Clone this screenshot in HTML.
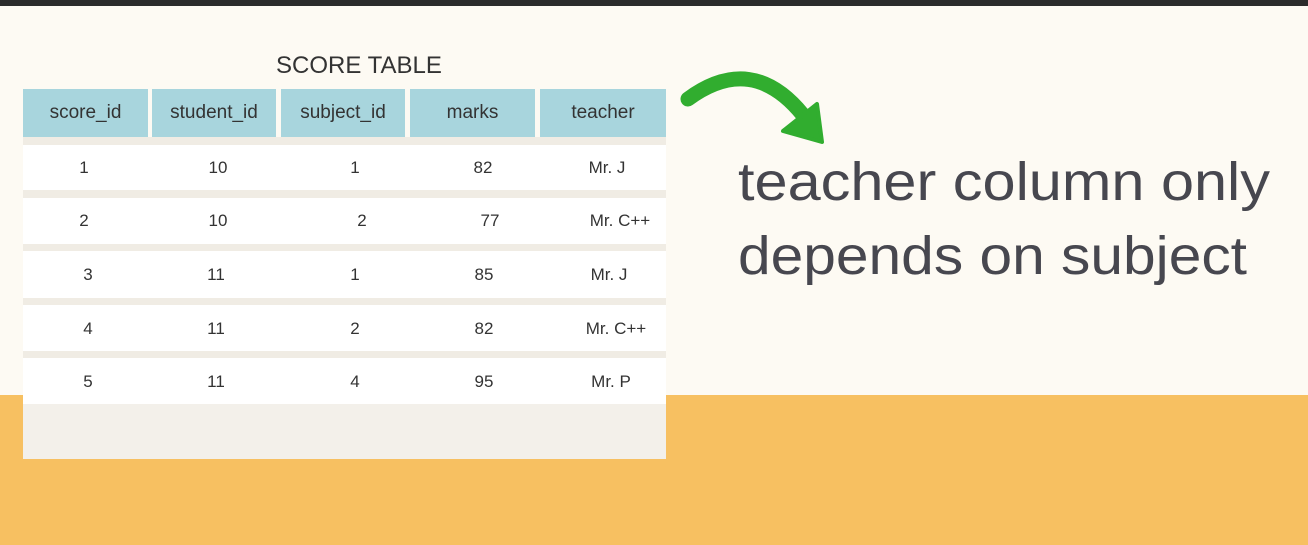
<!DOCTYPE html>
<html><head><meta charset="utf-8"><style>
*{margin:0;padding:0;box-sizing:border-box}
body{width:1308px;height:545px;overflow:hidden;background:#fdfaf3;position:relative;font-family:"Liberation Sans",sans-serif;color:#3a3a3a}
.top{position:absolute;left:0;top:0;width:1308px;height:6px;background:#2b2b2b}
.org{position:absolute;left:0;top:395px;width:1308px;height:150px;background:#f7c061}
.tbl{position:absolute;left:23px;top:137px;width:643px;height:322px;background:#f0ece4}
.gray{position:absolute;left:23px;top:404px;width:643px;height:55px;background:#f3f0ea}
.h{position:absolute;top:89px;height:48px;background:#a8d5dd;display:flex;align-items:center;justify-content:center;font-size:19px;color:#333}
.r{position:absolute;left:23px;width:643px;background:#fff}
.c{position:absolute;font-size:17px;color:#333;transform:translateX(-50%)}
.title{position:absolute;left:276px;top:52px;font-size:24px;color:#333}
</style></head><body>
<div class="top"></div>
<div class="org"></div>
<div class="tbl"></div>
<div class="gray"></div>
<div class="title">SCORE TABLE</div>
<div class="h" style="left:23px;width:125px">score_id</div>
<div class="h" style="left:152px;width:124px">student_id</div>
<div class="h" style="left:281px;width:124px">subject_id</div>
<div class="h" style="left:410px;width:125px">marks</div>
<div class="h" style="left:540px;width:126px">teacher</div>
<div class="r" style="top:145px;height:45px"></div>
<div class="r" style="top:198px;height:46px"></div>
<div class="r" style="top:251px;height:47px"></div>
<div class="r" style="top:305px;height:46px"></div>
<div class="r" style="top:358px;height:46px"></div>

<div class="c" style="left:84px;top:158px">1</div><div class="c" style="left:218px;top:158px">10</div><div class="c" style="left:355px;top:158px">1</div><div class="c" style="left:483px;top:158px">82</div><div class="c" style="left:607px;top:158px">Mr. J</div>
<div class="c" style="left:84px;top:211px">2</div><div class="c" style="left:218px;top:211px">10</div><div class="c" style="left:362px;top:211px">2</div><div class="c" style="left:490px;top:211px">77</div><div class="c" style="left:620px;top:211px">Mr. C++</div>
<div class="c" style="left:88px;top:265px">3</div><div class="c" style="left:216px;top:265px">11</div><div class="c" style="left:355px;top:265px">1</div><div class="c" style="left:484px;top:265px">85</div><div class="c" style="left:609px;top:265px">Mr. J</div>
<div class="c" style="left:88px;top:319px">4</div><div class="c" style="left:216px;top:319px">11</div><div class="c" style="left:355px;top:319px">2</div><div class="c" style="left:484px;top:319px">82</div><div class="c" style="left:616px;top:319px">Mr. C++</div>
<div class="c" style="left:88px;top:372px">5</div><div class="c" style="left:216px;top:372px">11</div><div class="c" style="left:355px;top:372px">4</div><div class="c" style="left:484px;top:372px">95</div><div class="c" style="left:611px;top:372px">Mr. P</div>

<svg style="position:absolute;left:0;top:0" width="1308" height="545">
<path d="M688 99 Q752 52 803 115" fill="none" stroke="#31ad2f" stroke-width="15" stroke-linecap="round"/>
<polygon points="817,104 822,142 783,131" fill="#31ad2f" stroke="#31ad2f" stroke-width="4" stroke-linejoin="round"/>
<text x="738" y="200" font-family="Liberation Sans,sans-serif" font-size="54" fill="#47474f" textLength="532" lengthAdjust="spacingAndGlyphs">teacher column only</text>
<text x="738" y="274" font-family="Liberation Sans,sans-serif" font-size="54" fill="#47474f" textLength="509" lengthAdjust="spacingAndGlyphs">depends on subject</text>
</svg>
</body></html>
